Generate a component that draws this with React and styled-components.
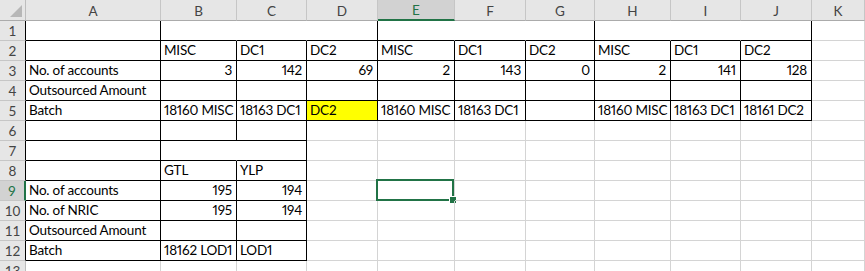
import React from "react";
import styled, { createGlobalStyle, css } from "styled-components";

const GlobalStyle = createGlobalStyle`
  html, body {
    margin: 0;
    padding: 0;
    background: #ffffff;
    overflow: hidden;
  }
  body {
    font-family: Lato, "Liberation Sans", sans-serif;
  }
`;

const GREEN = "#217346";
const GRID = "#d4d4d4";
const INK = "#000000";

// column widths include the 1px right border of each column
const COL_WIDTHS = [135, 76, 70, 71, 77, 71, 69, 76, 70, 71];
const LETTERS = ["A", "B", "C", "D", "E", "F", "G", "H", "I", "J", "K"];
const ROW_COUNT = 13;

const SELECTED = { row: 9, col: 4 };

// bordered ranges: rows and columns are inclusive, col 0 is A
const TABLES = [
  { r1: 1, r2: 5, c1: 0, c2: 9 },
  { r1: 6, r2: 12, c1: 0, c2: 2 },
];

// merged ranges inside a single row
const MERGES = [
  { row: 1, c1: 1, c2: 3 },
  { row: 1, c1: 4, c2: 6 },
  { row: 1, c1: 7, c2: 9 },
  { row: 7, c1: 1, c2: 2 },
];

const DATA = {
  2: ["", "MISC", "DC1", "DC2", "MISC", "DC1", "DC2", "MISC", "DC1", "DC2"],
  3: ["No. of accounts", 3, 142, 69, 2, 143, 0, 2, 141, 128],
  4: ["Outsourced Amount"],
  5: ["Batch", "18160 MISC", "18163 DC1", "DC2", "18160 MISC", "18163 DC1", "", "18160 MISC", "18163 DC1", "18161 DC2"],
  8: ["", "GTL", "YLP"],
  9: ["No. of accounts", 195, 194],
  10: ["No. of NRIC", 195, 194],
  11: ["Outsourced Amount"],
  12: ["Batch", "18162 LOD1", "LOD1"],
};

const FILLS = { "5-3": "#ffff00" };

const inTable = (r, c) =>
  TABLES.some((t) => r >= t.r1 && r <= t.r2 && c >= t.c1 && c <= t.c2);

const sameMerge = (r, a, b) =>
  MERGES.some((m) => m.row === r && a >= m.c1 && a <= m.c2 && b >= m.c1 && b <= m.c2);

const rightEdge = (r, c) => {
  if (sameMerge(r, c, c + 1)) return "transparent";
  if (inTable(r, c) || inTable(r, c + 1)) return INK;
  return GRID;
};

const bottomEdge = (r, c) => {
  if (inTable(r, c) || inTable(r + 1, c)) return INK;
  return GRID;
};

const Sheet = styled.div`
  display: grid;
  grid-template-columns: 26px ${COL_WIDTHS.map((w) => `${w}px`).join(" ")} 1fr;
  grid-template-rows: 21px repeat(${ROW_COUNT}, 20px);
  width: 865px;
  height: 271px;
  overflow: hidden;
  background: #ffffff;
`;

const headerBase = css`
  box-sizing: border-box;
  display: flex;
  align-items: center;
  justify-content: center;
  font-family: Lato, "Liberation Sans", sans-serif;
  font-size: 13.5px;
  color: ${(p) => (p.$active ? GREEN : "#444444")};
  background: ${(p) => (p.$active ? "#d2d2d2" : "#e6e6e6")};
  user-select: none;
`;

const Corner = styled.div`
  position: relative;
  box-sizing: border-box;
  background: #e6e6e6;
  border-right: 1px solid #bdbdbd;
  border-bottom: 1px solid #ababab;

  &::after {
    content: "";
    position: absolute;
    right: 3px;
    bottom: 3px;
    width: 0;
    height: 0;
    border-left: 12px solid transparent;
    border-bottom: 12px solid #b7b7b7;
  }
`;

const ColHeader = styled.div`
  ${headerBase}
  padding-top: 1px;
  border-right: 1px solid #c6c6c6;
  border-bottom: ${(p) => (p.$active ? `2px solid ${GREEN}` : "1px solid #ababab")};
`;

const RowHeader = styled.div`
  ${headerBase}
  padding-top: 1px;
  border-bottom: 1px solid #c6c6c6;
  border-right: ${(p) => (p.$active ? `2px solid ${GREEN}` : `1px solid ${p.$edge}`)};
`;

const Cell = styled.div`
  position: relative;
  box-sizing: border-box;
  display: flex;
  align-items: flex-end;
  justify-content: ${(p) => (p.$numeric ? "flex-end" : "flex-start")};
  padding: ${(p) => (p.$numeric ? "0 4px 1px 0" : "0 0 1px 3px")};
  white-space: nowrap;
  font-family: Lato, "Liberation Sans", sans-serif;
  font-size: 13.5px;
  font-variant-numeric: proportional-nums;
  letter-spacing: -0.2px;
  line-height: 18px;
  color: #000000;
  background: ${(p) => p.$fill || "transparent"};
  border-right: 1px solid ${(p) => p.$right};
  border-bottom: 1px solid ${(p) => p.$bottom};
`;

const Selection = styled.div`
  position: absolute;
  top: -2px;
  left: -2px;
  right: 0;
  bottom: -1px;
  border: 2px solid ${GREEN};
  pointer-events: none;
`;

const FillHandle = styled.div`
  position: absolute;
  right: -4px;
  bottom: -4px;
  width: 6px;
  height: 6px;
  background: ${GREEN};
  box-shadow: 0 0 0 1px #ffffff;
`;

function SheetCell({ row, col }) {
  const value = DATA[row] ? DATA[row][col] : undefined;
  const numeric = typeof value === "number";
  const selected = row === SELECTED.row && col === SELECTED.col;
  return (
    <Cell
      $numeric={numeric}
      $fill={FILLS[`${row}-${col}`]}
      $right={rightEdge(row, col)}
      $bottom={bottomEdge(row, col)}
    >
      {value !== undefined && value !== "" ? value : null}
      {selected && (
        <Selection>
          <FillHandle />
        </Selection>
      )}
    </Cell>
  );
}

export default function App() {
  const rows = Array.from({ length: ROW_COUNT }, (_, i) => i + 1);
  return (
    <>
      <GlobalStyle />
      <Sheet>
        <Corner />
        {LETTERS.map((l, c) => (
          <ColHeader key={l} $active={c === SELECTED.col}>
            {l}
          </ColHeader>
        ))}
        {rows.map((r) => (
          <React.Fragment key={r}>
            <RowHeader
              $active={r === SELECTED.row}
              $edge={r <= 12 ? INK : "#bdbdbd"}
            >
              {r}
            </RowHeader>
            {LETTERS.map((l, c) => (
              <SheetCell key={l} row={r} col={c} />
            ))}
          </React.Fragment>
        ))}
      </Sheet>
    </>
  );
}
